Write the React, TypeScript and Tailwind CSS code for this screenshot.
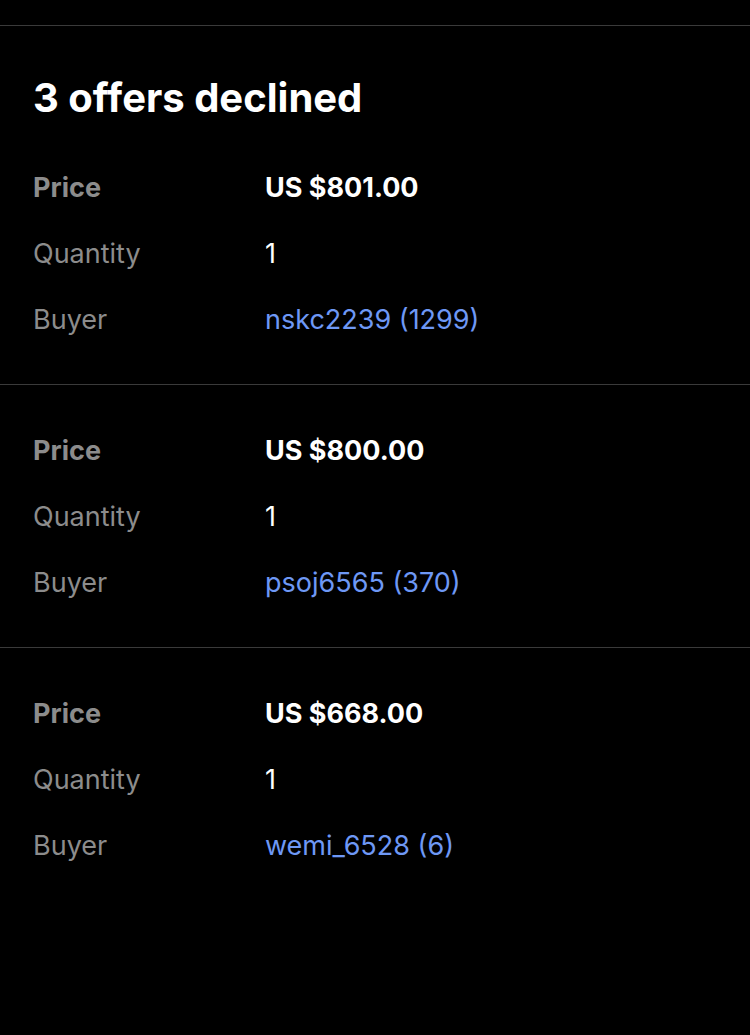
import React from 'react';

type Offer = {
  price: string;
  quantity: string;
  buyer: string;
};

const offers: Offer[] = [
  { price: 'US $801.00', quantity: '1', buyer: 'nskc2239 (1299)' },
  { price: 'US $800.00', quantity: '1', buyer: 'psoj6565 (370)' },
  { price: 'US $668.00', quantity: '1', buyer: 'wemi_6528 (6)' },
];

const Row: React.FC<{ label: string; bold?: boolean; children: React.ReactNode }> = ({ label, bold, children }) => (
  <div className="flex h-[66px] items-center pt-[2px]">
    <div className={`w-[232px] shrink-0 text-[#8c8c8c] ${bold ? 'font-bold' : ''}`}>{label}</div>
    <div className="min-w-0">{children}</div>
  </div>
);

const OfferBlock: React.FC<{ offer: Offer; first?: boolean }> = ({ offer, first }) => (
  <section className="border-t border-[#3a3a3a] px-[33px] pb-8 pt-8">
    {first && (
      <h1 className="mb-8 mt-4 text-[40px] font-bold leading-[48px] text-white">
        3 offers declined
      </h1>
    )}
    <Row label="Price" bold>
      <span className="font-bold text-white">{offer.price}</span>
    </Row>
    <Row label="Quantity">
      <span className="text-white">{offer.quantity}</span>
    </Row>
    <Row label="Buyer">
      <a href="#" className="text-[#6e98f5]">
        {offer.buyer}
      </a>
    </Row>
  </section>
);

const App: React.FC = () => {
  return (
    <div
      className="min-h-[1035px] w-full bg-black pt-[25px] text-[27px] leading-[34px]"
      style={{ fontFamily: 'Inter, "Noto Sans", sans-serif' }}
    >
      {offers.map((o, i) => (
        <OfferBlock key={o.buyer} offer={o} first={i === 0} />
      ))}
    </div>
  );
};

export default App;
